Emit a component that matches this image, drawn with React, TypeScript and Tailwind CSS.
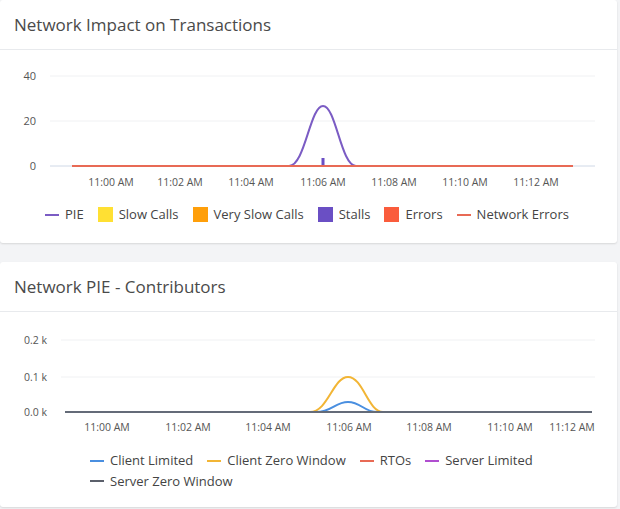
import React from 'react';

const font = { fontFamily: '"Open Sans", "Liberation Sans", sans-serif' };

const LineKey = ({ color, label }: { color: string; label: string }) => (
  <div className="flex items-center gap-[6px]">
    <span className="inline-block w-[14px] h-[2px]" style={{ background: color }} />
    <span>{label}</span>
  </div>
);

const BoxKey = ({ color, label }: { color: string; label: string }) => (
  <div className="flex items-center gap-[6px]">
    <span className="inline-block w-[15px] h-[15px]" style={{ background: color }} />
    <span>{label}</span>
  </div>
);

const Card: React.FC<{ title: string; children: React.ReactNode; className?: string }> = ({ title, children, className }) => (
  <div className={`bg-white rounded-[3px] shadow-[0_1px_2px_rgba(0,0,0,0.12)] ${className ?? ''}`}>
    <div className="h-[50px] flex items-center px-[14px] border-b border-[#e8eaed] text-[17px] text-[#4a4a4a]">{title}</div>
    {children}
  </div>
);

export default function App() {
  const x1 = [['11:00 AM', 111], ['11:02 AM', 180], ['11:04 AM', 251], ['11:06 AM', 323], ['11:08 AM', 394], ['11:10 AM', 465], ['11:12 AM', 536]] as const;
  const x2 = [['11:00 AM', 107], ['11:02 AM', 188], ['11:04 AM', 268], ['11:06 AM', 349], ['11:08 AM', 429], ['11:10 AM', 510], ['11:12 AM', 572]] as const;
  return (
    <div className="w-[620px] h-[509px] bg-[#f3f4f6] flex flex-col gap-[19px]" style={font}>
      <Card title="Network Impact on Transactions" className="h-[243px] w-[617px]">
        <svg width="617" height="145" className="block" fontSize="11" fill="#555">
          {[26, 71].map(y => <line key={y} x1="50" x2="595" y1={y} y2={y} stroke="#f0f1f3" />)}
          <line x1="50" x2="595" y1="116" y2="116" stroke="#cfd8e6" />
          <text x="36" y="30" textAnchor="end">40</text>
          <text x="36" y="75" textAnchor="end">20</text>
          <text x="36" y="120" textAnchor="end">0</text>
          {x1.map(([t, x]) => <text key={t} x={x} y="136" textAnchor="middle" fontSize="10.5">{t}</text>)}
          <rect x="321.5" y="108" width="3" height="8" fill="#6a4fc4" />
          <path d="M289 116 C305 116 310 56 323 56 C336 56 341 116 356 116" fill="none" stroke="#7b5cc4" strokeWidth="2" />
          <line x1="72" x2="573" y1="116" y2="116" stroke="#e86a55" strokeWidth="2" />
        </svg>
        <div className="flex items-center gap-[14px] pl-[45px] pt-[10px] text-[13px] text-[#444]">
          <LineKey color="#7b5cc4" label="PIE" />
          <BoxKey color="#ffe033" label="Slow Calls" />
          <BoxKey color="#ff9f0a" label="Very Slow Calls" />
          <BoxKey color="#6a4fc4" label="Stalls" />
          <BoxKey color="#fa5c3c" label="Errors" />
          <LineKey color="#e86a55" label="Network Errors" />
        </div>
      </Card>
      <Card title="Network PIE - Contributors" className="h-[245px] w-[617px]">
        <svg width="617" height="127" className="block" fontSize="10.5" fill="#555">
          {[28, 65].map(y => <line key={y} x1="61" x2="595" y1={y} y2={y} stroke="#f0f1f3" />)}
          <text x="47" y="32" textAnchor="end">0.2 k</text>
          <text x="47" y="69" textAnchor="end">0.1 k</text>
          <text x="47" y="104" textAnchor="end">0.0 k</text>
          {x2.map(([t, x]) => <text key={t} x={x} y="119" textAnchor="middle">{t}</text>)}
          <path d="M310 100 C328 100 333 65 348 65 C363 65 368 100 383 100" fill="none" stroke="#f2b535" strokeWidth="2" />
          <path d="M316 100 C332 100 335 90 348 90 C361 90 364 100 377 100" fill="none" stroke="#4a8fe0" strokeWidth="2" />
          <line x1="65" x2="592" y1="100" y2="100" stroke="#646b78" strokeWidth="2" />
        </svg>
        <div className="pl-[90px] pt-[12px] text-[13px] text-[#444] flex flex-col gap-[1px]">
          <div className="flex items-center gap-[14px]">
            <LineKey color="#4a8fe0" label="Client Limited" />
            <LineKey color="#f2b535" label="Client Zero Window" />
            <LineKey color="#e86a55" label="RTOs" />
            <LineKey color="#b04ed0" label="Server Limited" />
          </div>
          <LineKey color="#5b606b" label="Server Zero Window" />
        </div>
      </Card>
    </div>
  );
}
